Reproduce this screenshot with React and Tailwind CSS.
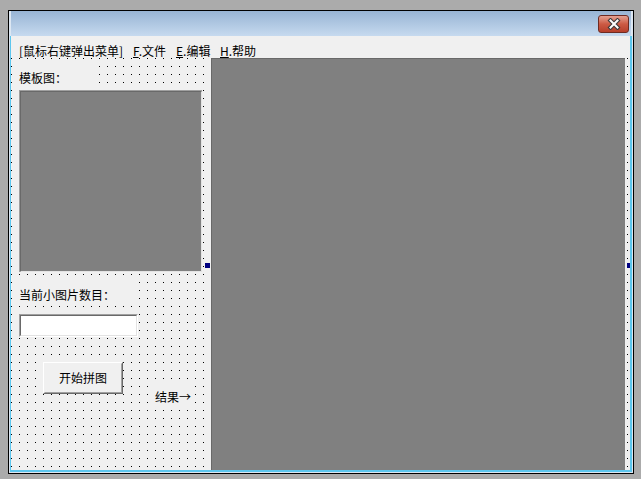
export default function App() {
  return (
    <div className="w-[641px] h-[479px] bg-[#ababab] pt-[10px] pl-[8px] font-['Noto_Sans_CJK_SC',sans-serif] text-[12px] leading-[12px] text-black overflow-hidden">
      <div className="w-[626px] h-[464px] border border-black bg-[#dde7f2] flex flex-col">
        {/* title bar */}
        <div className="h-[25px] mx-[2px] shrink-0 bg-gradient-to-b from-[#98b4d4] to-[#c6daef] flex justify-end">
          <div className="mt-[4px] mr-[2px] w-[31px] h-[18px] rounded-[3px] border border-[#6e2b22] bg-gradient-to-b from-[#e3a192] via-[#cc5a44] to-[#b63f2b] flex items-center justify-center">
            <svg width="14" height="12" viewBox="0 0 14 12">
              <path d="M3.5 2.5 L10.5 9.5 M10.5 2.5 L3.5 9.5" stroke="#3b3b3b" strokeWidth="4.2" strokeLinecap="square" fill="none" />
              <path d="M3.5 2.5 L10.5 9.5 M10.5 2.5 L3.5 9.5" stroke="#ffffff" strokeWidth="2" strokeLinecap="square" fill="none" />
            </svg>
          </div>
        </div>
        {/* client */}
        <div className="mx-[1px] mb-[1px] border-l border-r-2 border-b-2 border-[#5cc6ee] flex-1 flex flex-col bg-[#f0f0f0] min-h-0">
          {/* menu bar */}
          <div className="h-[22px] shrink-0 pt-[9px] pl-[8px] flex">
            <span className="w-[114px]">[鼠标右键弹出菜单]</span>
            <span className="w-[43px]"><span className="underline">F</span>.文件</span>
            <span className="w-[44px]"><span className="underline">E</span>.编辑</span>
            <span><span className="underline">H</span>.帮助</span>
          </div>
          {/* form area */}
          <div className="relative flex-1 flex min-h-0 [background-image:linear-gradient(to_right,#f0f0f0_7px,transparent_7px),linear-gradient(to_bottom,#f0f0f0_7px,#000_7px)] [background-size:8px_8px] [background-position:1px_1px]">
            <div className="w-[200px] shrink-0 flex flex-col items-start pl-[8px]">
              <div className="mt-[2px] w-[80px] h-[28px] pt-[12px] bg-[#f0f0f0]">模板图：</div>
              <div className="mt-[2px] w-[183px] h-[182px] border-t border-l border-[#a0a0a0] border-r-white border-b-white flex">
                <div className="flex-1 border-t border-l border-[#696969] border-r-[#e3e3e3] border-b-[#e3e3e3] border-r border-b bg-[#808080]" />
              </div>
              <div className="mt-[8px] w-[120px] h-[24px] pt-[9px] bg-[#f0f0f0]">当前小图片数目：</div>
              <div className="mt-[10px] w-[119px] h-[23px] border-t border-l border-r border-b border-t-[#a0a0a0] border-l-[#a0a0a0] border-r-white border-b-white flex">
                <div className="flex-1 border-t border-l border-r border-b border-t-[#696969] border-l-[#696969] border-r-[#e3e3e3] border-b-[#e3e3e3] bg-white" />
              </div>
              <div className="mt-[25px] flex items-start">
                <div className="ml-[24px] w-[80px] h-[32px] border border-t-white border-l-white border-r-[#696969] border-b-[#696969] flex">
                  <div className="flex-1 border border-t-[#f0f0f0] border-l-[#f0f0f0] border-r-[#a0a0a0] border-b-[#a0a0a0] bg-[#f0f0f0] flex items-center justify-center">
                    开始拼图
                  </div>
                </div>
                <div className="ml-[29px] mt-[23px] w-[40px] h-[21px] pt-[6px] pl-[3px] bg-[#f0f0f0]">结果→</div>
              </div>
            </div>
            <div className="w-[414px] shrink-0 border-t border-l border-[#696969] bg-[#808080]" />
            <div className="absolute left-[194px] top-[205px] w-[5px] h-[5px] bg-[#000080]" />
            <div className="absolute left-[616px] top-[205px] w-[3px] h-[5px] bg-[#000080]" />
          </div>
        </div>
      </div>
    </div>
  );
}
